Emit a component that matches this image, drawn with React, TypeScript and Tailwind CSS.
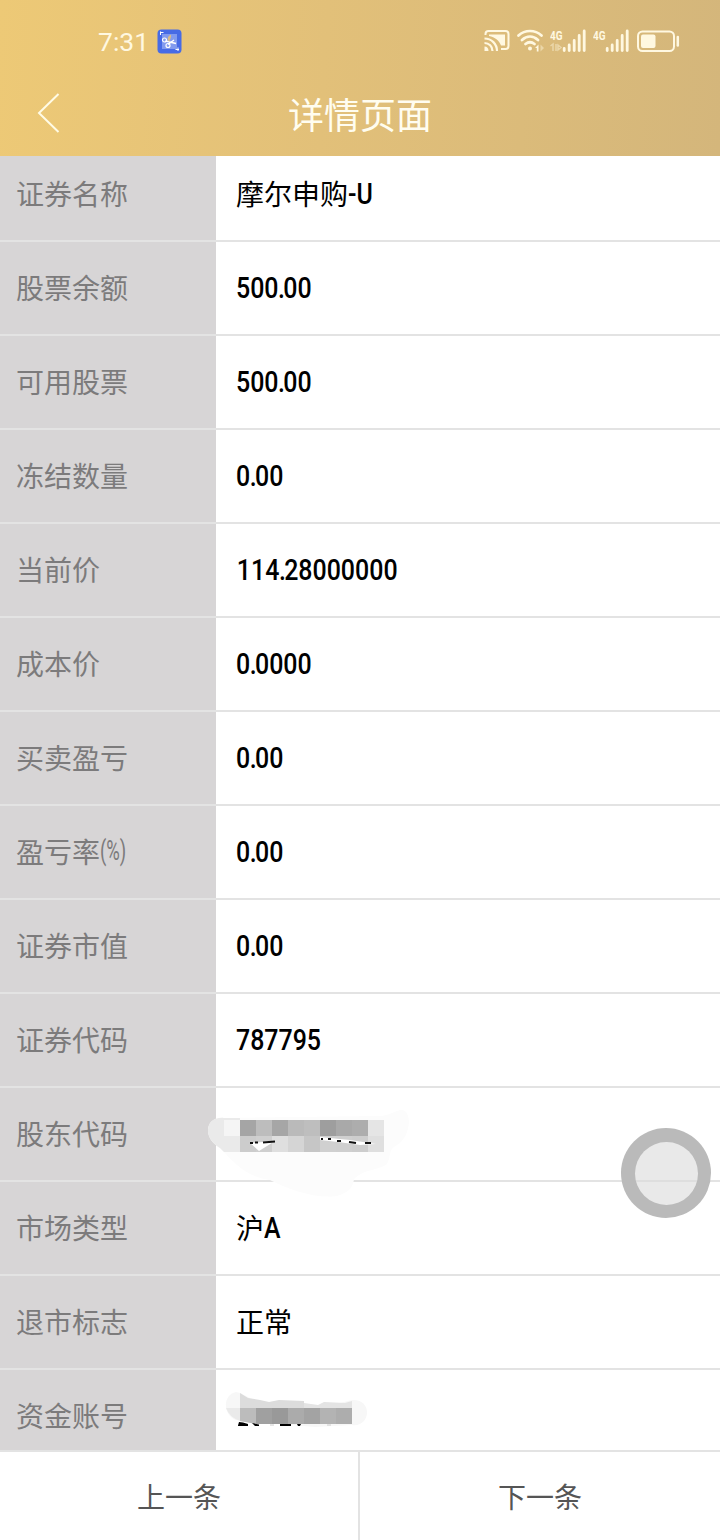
import { clsx } from 'clsx';

type Row = { label: string; unit?: string; cjk?: string; value?: string };

const rows: Row[] = [
  { label: '证券名称', cjk: '摩尔申购', value: '-U' },
  { label: '股票余额', value: '500.00' },
  { label: '可用股票', value: '500.00' },
  { label: '冻结数量', value: '0.00' },
  { label: '当前价', value: '114.28000000' },
  { label: '成本价', value: '0.0000' },
  { label: '买卖盈亏', value: '0.00' },
  { label: '盈亏率', unit: '(%)', value: '0.00' },
  { label: '证券市值', value: '0.00' },
  { label: '证券代码', value: '787795' },
  { label: '股东代码' },
  { label: '市场类型', cjk: '沪', value: 'A' },
  { label: '退市标志', cjk: '正常' },
  { label: '资金账号' },
];

function Signal({ data }: { data?: boolean }) {
  return (
    <svg width="38" height="26" viewBox="0 0 38 26" fill="none" stroke="#fff8e1">
      <text x="0" y="11.5" textLength="12.5" lengthAdjust="spacingAndGlyphs" fontSize="13" fontWeight="700" fontFamily="Roboto, sans-serif" fill="#fff8e1" stroke="none">4G</text>
      {data && <path d="M0.5 18L3 16V23M6 16V23M8 17V22L11 19.5Z" strokeWidth="1.5" opacity="0.45" />}
      <path d="M14.2 20.5V22.5M19.2 17V22.5M24.2 12.5V22.5M29.2 7.5V22.5M34.2 3V22.5" strokeWidth="2.8" strokeLinecap="round" />
    </svg>
  );
}

function StatusBar() {
  return (
    <div className="flex h-[82px] items-center pl-[98px] pr-[40px] text-[#fff8e1]">
      <span className="mt-[3px] w-[59px] font-[Roboto,sans-serif] text-[26.5px] leading-none">7:31</span>
      <svg width="25" height="25" viewBox="0 0 25 25" fill="none">
        <rect x="0.5" y="0.5" width="24" height="24" rx="4" fill="#476be5" />
        <rect x="5" y="5" width="15" height="15" fill="#829bee" />
        <path d="M3 3.5H6.5M3.500 2.5V6M18.5 20.5H22M21 18.5V22" stroke="#fff" />
        <path d="M8.5 12L19 14.5M11 15.5L17 11" stroke="#fff" strokeWidth="1.4" />
        <path d="M11 12C10 9 11 7 14 5.5C14.5 8.500 13 10 12.500 12.500Z" fill="#d9bc87" />
        <circle cx="7.500" cy="11" r="2" stroke="#fff" strokeWidth="1.2" />
        <circle cx="11" cy="16.500" r="2" stroke="#fff" strokeWidth="1.2" />
      </svg>
      <div className="ml-auto flex items-center">
        <svg className="mr-[7px]" width="26" height="26" viewBox="0 0 26 26" fill="none" stroke="#fff8e1">
          <path d="M1.500 7V6Q1.500 3 4.500 3H21.500Q24.500 3 24.500 6V18Q24.500 21 21.500 21H17" strokeWidth="2" />
          <path d="M5 6.500H21V17.500H17C15 12.500 11 9 5 8Z" fill="#fff8e1" stroke="none" />
          <path d="M0.500 10.500C7.500 10.500 13 16 13 23M0.500 15C5 15 8.500 18.500 8.500 23" strokeWidth="2.2" />
          <path d="M0.500 18.500Q4.500 18.500 4.500 23H0.500Z" fill="#fff8e1" stroke="none" />
        </svg>
        <svg className="mr-[5px]" width="28" height="26" viewBox="0 0 28 26" fill="none" stroke="#fff8e1" strokeWidth="2.7" strokeLinecap="round">
          <path d="M1.500 7.500C8 1.500 18 1.500 24.500 7.500M5 12C10 7.500 16 7.500 21 12M8.500 16Q13 12.500 17.500 16" />
          <circle cx="13" cy="20.500" r="2" fill="#fff8e1" stroke="none" />
          <path d="M18 20L21.500 16.500V23.500H19.800V20Z" fill="#fff8e1" stroke="none" />
          <path d="M23.500 16.500V23.500L27 20Z" fill="#fff8e1" stroke="none" opacity="0.45" />
        </svg>
        <Signal data />
        <span className="w-[5px]" />
        <Signal />
        <svg className="ml-[6px]" width="43" height="26" viewBox="0 0 43 26" fill="none" stroke="#fff8e1">
          <rect x="1" y="3.500" width="36" height="19.500" rx="4.500" strokeWidth="2" />
          <rect x="4" y="6.500" width="14.500" height="13.500" rx="2" fill="#fff8e1" stroke="none" />
          <path d="M40.800 9V17.500" strokeWidth="2.500" strokeLinecap="round" />
        </svg>
      </div>
    </div>
  );
}

// Narrow latin text; the decimal point is set a little tighter than the digits
function Narrow({ text }: { text: string }) {
  const [whole, fraction] = text.split('.');
  return (
    <span className={clsx('inline-block origin-left scale-x-[0.86] font-[Roboto,sans-serif] text-[29px] font-medium leading-none', text.startsWith('11') && 'pl-px')}>
      {whole}
      {fraction && (
        <>
          <span className="-ml-[0.5px] -mr-[2px]">.</span>
          {fraction}
        </>
      )}
    </span>
  );
}

const topTiles = ['#f5f5f5', '#a5a5a5', '#bdbdbd', '#a6a6a6', '#bababa', '#bebebe', '#9e9e9e', '#a9a9a9', '#adadad', '#e5e5e5'];
const bottomTiles = ['#eaeaea', '#cccccc', '#cfcfcf', '#dfdfdf', '#d5d5d5', '#c6c6c6', '#d0d0d0', '#cfcfcf', '#cdcdcd', '#dfdfdf'];
const accountTiles = ['#a0a0a0', '#999999', '#ababab', '#a3a3a3', '#b3b3b3', '#adadad'];

function HolderMask() {
  return (
    <svg className="absolute left-[200px] top-[1090px]" width="220" height="120" viewBox="200 1090 220 120">
      <path d="M224 1118C205 1116 202 1138 220 1148C235 1163 244 1176 270 1180C290 1190 315 1199 337 1196C350 1192 353 1187 354 1179C364 1169 375 1171 386 1165C392 1158 387 1150 397 1145C408 1139 413 1118 405 1111C399 1107 391 1116 380 1116Z" fill="#fcfcfc" />
      <path d="M224 1118C205 1116 202 1138 220 1148L224 1152H240V1118Z" fill="#eaeaea" />
      {topTiles.map((fill, i) => (
        <rect key={i} x={224 + i * 16} y="1120" width="16" height="16" fill={fill} />
      ))}
      {bottomTiles.map((fill, i) => (
        <rect key={i} x={224 + i * 16} y="1136" width="16" height="16" fill={fill} />
      ))}
      <path d="M250 1143L275 1141L259 1151ZM320 1137L350 1140L376 1144L360 1145L338 1142L320 1140Z" fill="#fff" />
      <path d="M250 1143H253M255 1142.500H258M263 1142.500L275 1141.500M321 1139H323M328 1139H331M337 1141H341M349 1142L356 1143M365 1143H371" stroke="#111" strokeWidth="2.200" />
    </svg>
  );
}

function AccountMask() {
  return (
    <svg className="absolute left-[220px] top-[1385px]" width="160" height="50" viewBox="220 1385 160 50">
      <path d="M236 1392C222 1395 223 1415 236 1420L315 1427L352 1425C370 1428 374 1399 352 1400L320 1408H270L240 1393Z" fill="#f7f7f7" />
      <path d="M240 1393L248 1398L260 1400L269 1402L279 1400L304 1401V1424H262L240 1421Z" fill="#dcdcdc" />
      <path d="M304 1403L318 1405L324 1402L345 1403L352 1401V1408H304Z" fill="#e4e4e4" />
      <path d="M226 1408Q229 1417 240 1421V1408Z" fill="#eaeaea" />
      <path d="M240 1408H256V1424L240 1421Z" fill="#bcbcbc" />
      {accountTiles.map((fill, i) => (
        <rect key={i} x={256 + i * 16} y="1408" width="16" height="16" fill={fill} />
      ))}
      <path d="M238 1425.500L239 1422L243 1422.500L248 1424V1426H238ZM252 1423L259 1424.500V1426H255ZM280 1424H291V1426H280ZM297 1424H301L300 1426H298Z" fill="#000" />
      <path d="M270 1425H274M327 1425H331" stroke="#ccc" />
    </svg>
  );
}

export default function App() {
  return (
    <div className="relative flex h-[1540px] w-[720px] flex-col overflow-hidden bg-white font-['Noto_Sans_CJK_SC',sans-serif]">
      <header className="h-[156px] shrink-0 bg-[linear-gradient(93deg,#edc976_0%,#e2c079_45%,#d4b67b_100%)]">
        <StatusBar />
        <div className="grid h-[61px] grid-cols-[100px_1fr_100px] items-center">
          <svg className="ml-[36px]" width="26" height="42" viewBox="0 0 26 42" fill="none" stroke="#fffbe6" strokeWidth="2">
            <path d="M22.500 2L3 21L22.500 40" />
          </svg>
          <h1 className="text-center text-[36px] leading-none text-[#fffdf0]">详情页面</h1>
        </div>
      </header>

      <main className="h-[1294px] shrink-0 overflow-hidden">
        <div className="-mt-2">
          {rows.map((row) => (
            <div key={row.label} className="flex h-[94px] border-b-2 border-[#e3e3e3] text-[28px] leading-none">
              <div className="flex w-[216px] items-center bg-[#d7d5d6] pb-0.5 pl-4 text-[#7c7b7c]">
                <span>{row.label}</span>
                {row.unit && (
                  <span className="inline-block origin-left scale-x-[0.66] font-[Roboto,sans-serif]">{row.unit}</span>
                )}
              </div>
              <div className="flex items-center pl-5 text-black">
                {row.cjk && <span className="pb-0.5">{row.cjk}</span>}
                {row.value && <Narrow text={row.value} />}
              </div>
            </div>
          ))}
        </div>
      </main>

      <footer className="flex h-[90px] border-t-2 border-[#e3e3e3] text-[28px] text-[#555]">
        <button className="w-[360px] border-r-2 border-[#e3e3e3]">上一条</button>
        <button className="w-[360px]">下一条</button>
      </footer>

      <HolderMask />
      <AccountMask />
      <div className="absolute left-[621px] top-[1128px] flex size-[90px] items-center justify-center rounded-full bg-[#bababa]">
        <div className="size-[63px] rounded-full bg-[linear-gradient(#e9e9e9_0_38px,#dedede_38px_40px,#e9e9e9_40px)]" />
      </div>
    </div>
  );
}
